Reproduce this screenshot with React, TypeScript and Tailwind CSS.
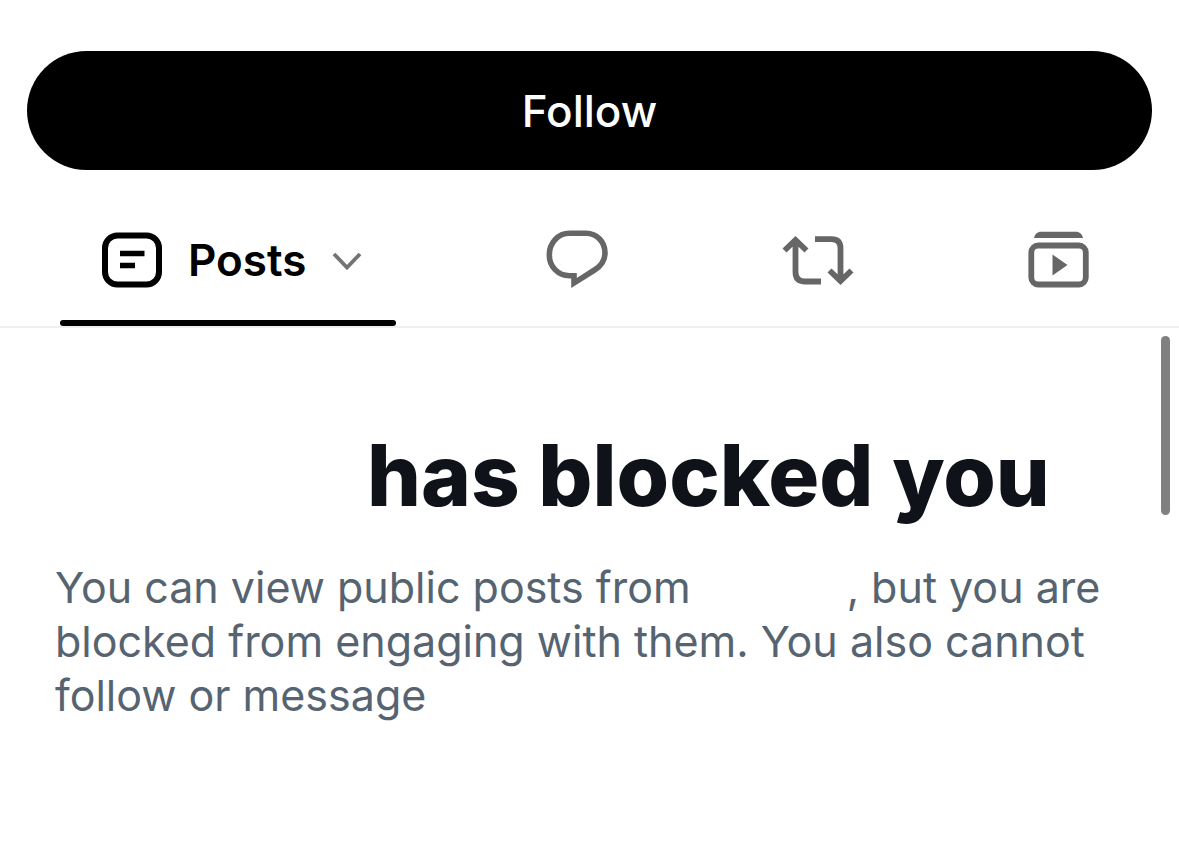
import { ReactNode } from 'react'

function PostsIcon() {
  return (
    <svg width="60" height="56" viewBox="0 0 60 56" fill="none" stroke="currentColor" aria-hidden="true">
      <rect x="3" y="3.5" width="54" height="49" rx="12.5" strokeWidth="6" />
      <path d="M18 21.5h24.5M18 33.5h15" strokeWidth="5.6" />
    </svg>
  )
}

function ChevronIcon() {
  return (
    <svg width="30" height="20" viewBox="0 0 30 20" fill="none" stroke="#737373" strokeWidth="3.8" aria-hidden="true">
      <path d="M2 4l13 13.5L28 4" />
    </svg>
  )
}

function ReplyIcon() {
  return (
    <svg width="100" height="90" viewBox="0 0 100 90" fill="none" stroke="currentColor" strokeWidth="5.6" aria-hidden="true">
      <path d="M40.5 18.3H57C68 18.3 76 27 76 38C76 45.5 72 51 65.5 55L45 68V60.7H40.5C29 60.7 20.3 51.500 20.3 40C20.3 28 29 18.3 40.5 18.3Z" />
    </svg>
  )
}

function RepostIcon() {
  return (
    <svg width="100" height="90" viewBox="0 0 100 90" fill="none" stroke="currentColor" strokeWidth="5.8" aria-hidden="true">
      <path d="M14.5 35.5L25.5 25L36.5 35.5M25.5 25V57Q25.5 66.5 35 66.5H51" />
      <path d="M45 24.2H61.5Q70.5 24.2 70.5 33.5V66M59.5 55.5L70.5 66L81.5 55.5" />
    </svg>
  )
}

function MediaIcon() {
  return (
    <svg width="100" height="90" viewBox="0 0 100 90" fill="none" stroke="currentColor" strokeWidth="5.8" aria-hidden="true">
      <path d="M23 23C24 19 26.5 16.8 30 16.8H65C68.5 16.8 71 19 72 23Z" fill="currentColor" stroke="none" />
      <rect x="20.3" y="30.5" width="54.5" height="39" rx="7" />
      <path d="M41.5 39.5V60.5L56.5 50Z" fill="currentColor" stroke="none" />
    </svg>
  )
}

interface IconTabProps {
  label: string
  icon: ReactNode
}

function IconTab({ label, icon }: IconTabProps) {
  return (
    <button
      type="button"
      role="tab"
      aria-selected="false"
      aria-label={label}
      className="flex flex-1 items-center justify-center pl-1 text-[#666666]"
    >
      {icon}
    </button>
  )
}

export default function App() {
  return (
    <main className="min-h-screen bg-white font-['Inter',sans-serif]">
      <div className="px-[27px] pt-[51px]">
        <button
          type="button"
          className="h-[119px] w-full rounded-full bg-black text-[44px] font-medium text-white"
        >
          Follow
        </button>
      </div>

      <div role="tablist" className="mt-6 flex h-[134px] border-b-2 border-[#efefef]">
        <div className="flex px-[60px]">
          <button
            type="button"
            role="tab"
            aria-selected="true"
            className="relative flex w-[336px] items-center gap-[26px] pl-[42px] text-[44px] font-semibold text-black"
          >
            <PostsIcon />
            <span>Posts</span>
            <ChevronIcon />
            <span className="absolute inset-x-0 bottom-0 h-1.5 rounded-full bg-black" />
          </button>
        </div>
        <IconTab label="Replies" icon={<ReplyIcon />} />
        <IconTab label="Reposts" icon={<RepostIcon />} />
        <IconTab label="Media" icon={<MediaIcon />} />
      </div>

      <section className="relative px-[55px] pt-24">
        <div className="absolute top-2 right-[9px] h-[179px] w-[9px] rounded-full bg-[#808080]" />
        <h1 className="pl-[312px] text-[85px] leading-[104px] font-extrabold text-[#0f1218]">
          has blocked you
        </h1>
        <p className="mt-8 text-[43px] leading-[54px] text-[#566471]">
          You can view public posts from
          <span className="inline-block w-[156px]" />, but you are
          <br />
          blocked from engaging with them. You also cannot
          <br />
          follow or message
        </p>
      </section>
    </main>
  )
}
